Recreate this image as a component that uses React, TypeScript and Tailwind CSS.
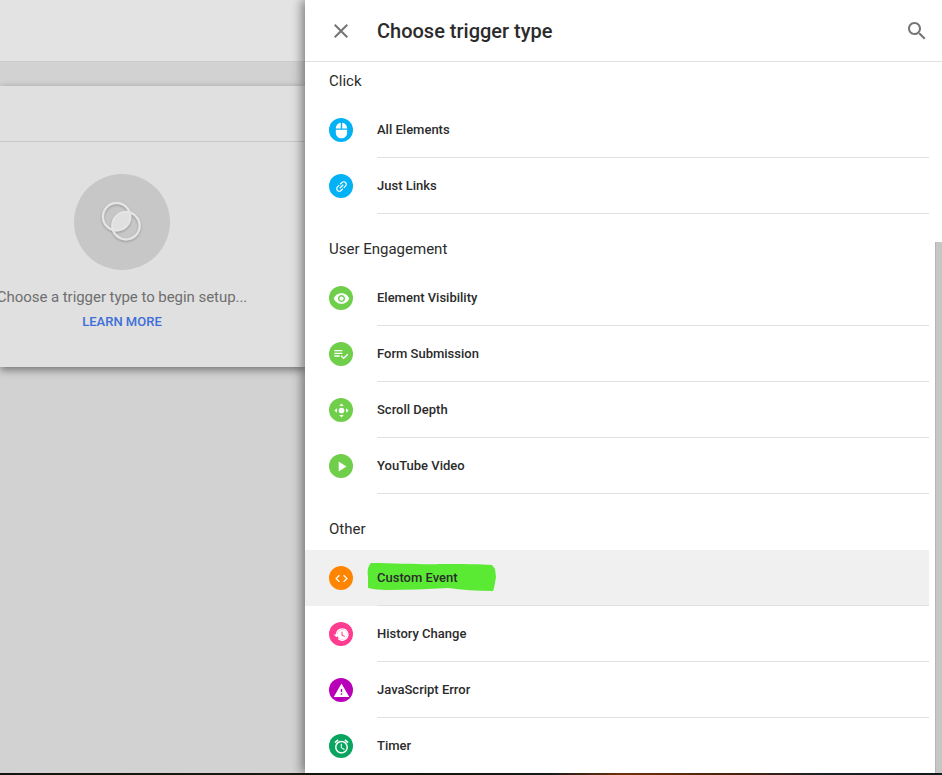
import type { ReactNode } from 'react'

const font = { fontFamily: 'Roboto, sans-serif' }

type Item = { label: string; color: string; icon: ReactNode; active?: boolean }

const Glyph = ({ d, size = 16, rotate }: { d: string; size?: number; rotate?: number }) => (
  <svg width={size} height={size} viewBox="0 0 24 24" fill="white" style={rotate ? { transform: `rotate(${rotate}deg)` } : undefined}>
    <path d={d} />
  </svg>
)

const click: Item[] = [
  {
    label: 'All Elements',
    color: 'bg-[#03b1f5]',
    icon: <Glyph size={17} d="M13 1.07V9h7c0-4.08-3.05-7.44-7-7.93zM4 15c0 4.42 3.58 8 8 8s8-3.58 8-8v-4H4v4zm7-13.93C7.05 1.56 4 4.92 4 9h7V1.07z" />,
  },
  {
    label: 'Just Links',
    color: 'bg-[#03b1f5]',
    icon: <Glyph size={15} rotate={-45} d="M3.9 12c0-1.71 1.39-3.1 3.1-3.1h4V7H7c-2.76 0-5 2.24-5 5s2.24 5 5 5h4v-1.9H7c-1.71 0-3.1-1.39-3.1-3.1zM8 13h8v-2H8v2zm9-6h-4v1.9h4c1.71 0 3.1 1.39 3.1 3.1s-1.39 3.1-3.1 3.1h-4V17h4c2.76 0 5-2.24 5-5s-2.24-5-5-5z" />,
  },
]

const engagement: Item[] = [
  {
    label: 'Element Visibility',
    color: 'bg-[#6fcf4a]',
    icon: <Glyph size={17} d="M12 4.5C7 4.5 2.73 7.61 1 12c1.73 4.39 6 7.5 11 7.5s9.27-3.11 11-7.5c-1.73-4.39-6-7.5-11-7.5zM12 17c-2.76 0-5-2.24-5-5s2.24-5 5-5 5 2.24 5 5-2.24 5-5 5zm0-8c-1.66 0-3 1.34-3 3s1.34 3 3 3 3-1.34 3-3-1.34-3-3-3z" />,
  },
  {
    label: 'Form Submission',
    color: 'bg-[#6fcf4a]',
    icon: <Glyph size={16} d="M14 10H2v2h12v-2zm0-4H2v2h12V6zM2 16h8v-2H2v2zm19.5-4.5L23 13l-6.99 7-4.51-4.5L13 14l3.01 3 5.49-5.5z" />,
  },
  {
    label: 'Scroll Depth',
    color: 'bg-[#6fcf4a]',
    icon: (
      <svg width="17" height="17" viewBox="0 0 24 24" fill="white">
        <circle cx="12" cy="12" r="4" />
        <path d="M12 2l3.200 3.600H8.800zM12 22l-3.200-3.600h6.400zM2 12l3.600-3.200v6.400zM22 12l-3.600 3.200V8.800z" />
      </svg>
    ),
  },
  {
    label: 'YouTube Video',
    color: 'bg-[#6fcf4a]',
    icon: <Glyph size={17} d="M8 5v14l11-7z" />,
  },
]

const other: Item[] = [
  {
    label: 'Custom Event',
    color: 'bg-[#ff8500]',
    active: true,
    icon: <Glyph size={15} d="M9.4 16.6L4.8 12l4.6-4.6L8 6l-6 6 6 6 1.4-1.4zm5.200 0l4.600-4.600-4.600-4.600L16 6l6 6-6 6-1.400-1.400z" />,
  },
  {
    label: 'History Change',
    color: 'bg-[#ff3d90]',
    icon: (
      <svg width="17" height="17" viewBox="0 0 24 24" fill="white">
        <path d="M13 3c-4.970 0-9 4.030-9 9H1l3.890 3.890.07.140L9 12H6c0-3.870 3.130-7 7-7s7 3.130 7 7-3.130 7-7 7c-1.930 0-3.680-.79-4.940-2.060l-1.420 1.420C8.270 19.990 10.510 21 13 21c4.970 0 9-4.030 9-9s-4.030-9-9-9z" />
        <circle cx="13" cy="12" r="7" />
        <path d="M12 8h1.500v4.250l3.500 2.080-.72 1.210L12 13z" fill="#ff3d90" />
      </svg>
    ),
  },
  {
    label: 'JavaScript Error',
    color: 'bg-[#b900b9]',
    icon: <Glyph size={17} d="M1 21h22L12 2 1 21zm12-3h-2v-2h2v2zm0-4h-2v-4h2v4z" />,
  },
  {
    label: 'Timer',
    color: 'bg-[#09a55f]',
    icon: <Glyph size={17} d="M22 5.720l-4.600-3.860-1.290 1.530 4.600 3.860L22 5.720zM7.880 3.390L6.600 1.860 2 5.710l1.290 1.530 4.590-3.850zM12.500 8H11v6l4.750 2.850.75-1.230-4-2.370V8zM12 4c-4.970 0-9 4.030-9 9s4.020 9 9 9c4.970 0 9-4.030 9-9s-4.030-9-9-9zm0 16c-3.870 0-7-3.130-7-7s3.130-7 7-7 7 3.130 7 7-3.130 7-7 7z" />,
  },
]

function Row({ item }: { item: Item }) {
  return (
    <div className={`flex h-14 w-[624px] ${item.active ? 'bg-[#f0f0f0]' : ''}`}>
      <div className="flex w-[72px] items-center pl-6">
        <div className={`flex h-6 w-6 items-center justify-center rounded-full ${item.color}`}>{item.icon}</div>
      </div>
      <div className="relative flex flex-1 items-center border-b border-[#e0e0e0] text-[13px] font-medium text-[#2b2b2b]">
        {item.active && (
          <svg className="absolute left-[-10px] top-[13px]" width="130" height="30" viewBox="0 0 130 30" fill="#5aea34">
            <path d="M4 0C30 0 60 2 71 1C95 1 115 1 125 2L128 6L129 14L127 25L126 28C110 28 95 27 81 25C60 26 40 27 21 27C12 27 5 26 1 25L1 14C0 8 1 3 4 0Z" />
          </svg>
        )}
        <span className="relative">{item.label}</span>
      </div>
    </div>
  )
}

function Section({ title, items, className }: { title: string; items: Item[]; className: string }) {
  return (
    <section>
      <h2 className={`pl-6 text-[15px] leading-5 text-[#2b2b2b] ${className}`}>{title}</h2>
      {items.map((item) => (
        <Row key={item.label} item={item} />
      ))}
    </section>
  )
}

export default function App() {
  return (
    <div className="flex h-[775px] w-[942px] flex-col overflow-hidden bg-[#d2d2d2]" style={font}>
      <div className="flex min-h-0 flex-1">
        {/* page behind the drawer */}
        <div className="w-[305px] shrink-0">
          <div className="h-[62px] border-b border-[#cdcdcd] bg-[#e3e3e3]" />
          <div className="mt-6 h-[281px] bg-[#e0e0e0] shadow-[0_3px_8px_rgba(0,0,0,0.45)]">
            <div className="h-14 border-b border-[#c8c8c8]" />
            <div className="flex w-[244px] flex-col items-center whitespace-nowrap pt-8">
              <div className="flex h-24 w-24 shrink-0 items-center justify-center rounded-full bg-[#c7c7c7]">
                <svg className="drop-shadow-[0_1px_1px_rgba(0,0,0,0.25)]" width="48" height="48" viewBox="0 0 48 48" fill="none">
                  <defs>
                    <clipPath id="lens">
                      <circle cx="18.600" cy="18.700" r="13.700" />
                    </clipPath>
                  </defs>
                  <circle cx="28" cy="27.700" r="13.700" fill="#e0e0e0" clipPath="url(#lens)" />
                  <circle cx="18.600" cy="18.700" r="13.700" stroke="#e4e4e4" strokeWidth="2.500" />
                  <circle cx="28" cy="27.700" r="13.700" stroke="#e4e4e4" strokeWidth="2.500" />
                </svg>
              </div>
              <p className="mt-[17px] text-[15px] leading-5 tracking-[-0.05px] text-[#6f6f6f]">Choose a trigger type to begin setup...</p>
              <a className="mt-[7px] text-[13px] font-medium leading-4 text-[#3d6fd8]">LEARN MORE</a>
            </div>
          </div>
        </div>

        {/* drawer */}
        <div className="relative flex min-w-0 flex-1 flex-col bg-white shadow-[-3px_0_10px_rgba(0,0,0,0.45)]">
          <header className="flex h-[62px] shrink-0 items-center border-b border-[#e0e0e0] pl-6 pr-[13px]">
            <svg className="w-6" width="24" height="24" viewBox="0 0 24 24" fill="#757575">
              <path d="M19 6.410L17.590 5 12 10.590 6.410 5 5 6.410 10.590 12 5 17.590 6.410 19 12 13.410 17.590 19 19 17.590 13.410 12z" />
            </svg>
            <h1 className="ml-6 flex-1 text-xl font-medium text-[#2b2b2b]">Choose trigger type</h1>
            <svg width="24" height="24" viewBox="0 0 24 24" fill="#757575">
              <path d="M15.500 14h-.79l-.28-.27C15.410 12.590 16 11.110 16 9.500 16 5.910 13.090 3 9.500 3S3 5.910 3 9.500 5.910 16 9.500 16c1.610 0 3.090-.59 4.230-1.570l.27.28v.79l5 4.990L20.490 19l-4.990-5zm-6 0C7.010 14 5 11.990 5 9.500S7.010 5 9.500 5 14 7.010 14 9.500 11.990 14 9.500 14z" />
            </svg>
          </header>
          <div className="flex-1 overflow-hidden">
            <Section title="Click" items={click} className="pb-[11px] pt-[9px]" />
            <Section title="User Engagement" items={engagement} className="pb-[11px] pt-[25px]" />
            <Section title="Other" items={other} className="pb-[11px] pt-[25px]" />
          </div>
          {/* scrollbar thumb */}
          <div className="absolute bottom-0 right-0 h-[531px] w-[7px] border-l border-[#b5b5b5] bg-[#c6c6c6]" />
        </div>
      </div>
      {/* sliver of the desktop below the window */}
      <div className="h-[2px] shrink-0 bg-[linear-gradient(90deg,#15130f_0%,#211a14_50%,#1c2024_58%,#8a3c0c_66%,#5a2c10_78%,#23282e_88%,#1a1c20_100%)]" />
    </div>
  )
}
